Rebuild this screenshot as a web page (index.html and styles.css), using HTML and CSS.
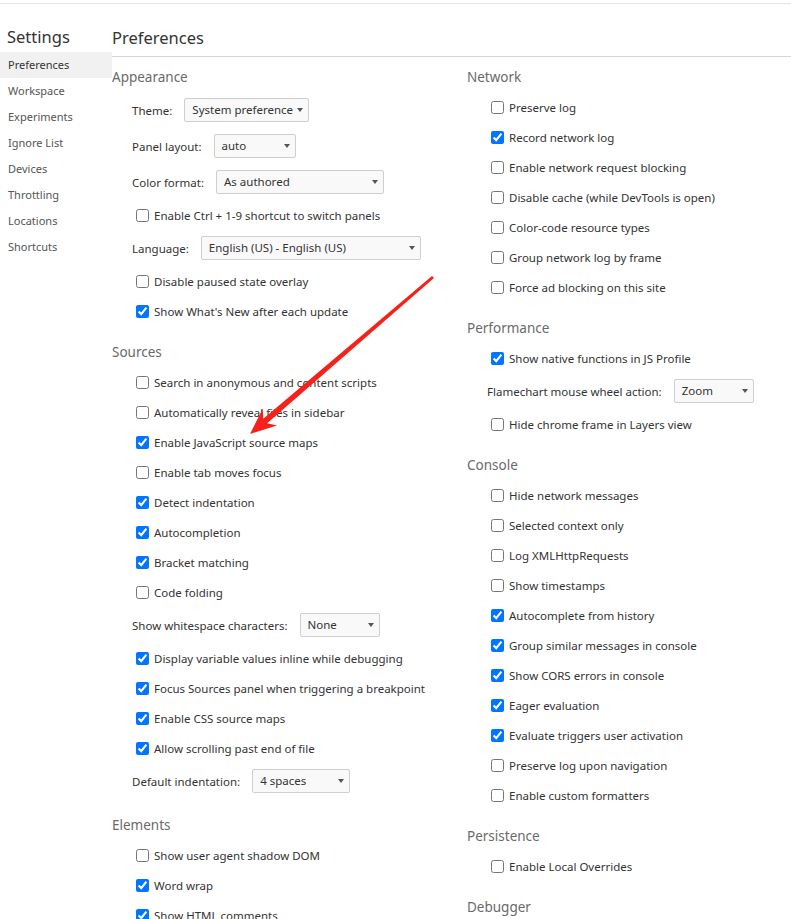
FILE: index.html
```html
<!doctype html>
<html>
<head>
<meta charset="utf-8">
<title>Settings</title>
<link rel="stylesheet" href="styles.css">
</head>
<body>
<div class="topbar"></div>
<div class="page">
	<div class="sidebar">
		<div class="sidebar-title">Settings</div>
		<ul class="nav">
			<li class="active">Preferences</li>
			<li>Workspace</li>
			<li>Experiments</li>
			<li>Ignore List</li>
			<li>Devices</li>
			<li>Throttling</li>
			<li>Locations</li>
			<li>Shortcuts</li>
		</ul>
	</div>
	<div class="main">
		<div class="header">Preferences</div>
		<div class="columns">
			<div class="col">
				<div class="section">
					<div class="section-title">Appearance</div>
					<div class="row sel"><span>Theme:</span><div class="select w-theme">System preference</div></div>
					<div class="row sel"><span>Panel layout:</span><div class="select w-panel">auto</div></div>
					<div class="row sel"><span>Color format:</span><div class="select w-color">As authored</div></div>
					<label class="row"><input type="checkbox">Enable Ctrl + 1-9 shortcut to switch panels</label>
					<div class="row sel"><span>Language:</span><div class="select w-lang">English (US) - English (US)</div></div>
					<label class="row"><input type="checkbox">Disable paused state overlay</label>
					<label class="row"><input type="checkbox" checked>Show What's New after each update</label>
				</div>
				<div class="section">
					<div class="section-title">Sources</div>
					<label class="row"><input type="checkbox">Search in anonymous and content scripts</label>
					<label class="row"><input type="checkbox">Automatically reveal files in sidebar</label>
					<label class="row"><input type="checkbox" checked>Enable JavaScript source maps</label>
					<label class="row"><input type="checkbox">Enable tab moves focus</label>
					<label class="row"><input type="checkbox" checked>Detect indentation</label>
					<label class="row"><input type="checkbox" checked>Autocompletion</label>
					<label class="row"><input type="checkbox" checked>Bracket matching</label>
					<label class="row"><input type="checkbox">Code folding</label>
					<div class="row sel"><span>Show whitespace characters:</span><div class="select w-space">None</div></div>
					<label class="row"><input type="checkbox" checked>Display variable values inline while debugging</label>
					<label class="row"><input type="checkbox" checked>Focus Sources panel when triggering a breakpoint</label>
					<label class="row"><input type="checkbox" checked>Enable CSS source maps</label>
					<label class="row"><input type="checkbox" checked>Allow scrolling past end of file</label>
					<div class="row sel"><span>Default indentation:</span><div class="select w-indent">4 spaces</div></div>
				</div>
				<div class="section">
					<div class="section-title">Elements</div>
					<label class="row"><input type="checkbox">Show user agent shadow DOM</label>
					<label class="row"><input type="checkbox" checked>Word wrap</label>
					<label class="row"><input type="checkbox" checked>Show HTML comments</label>
				</div>
			</div>
			<div class="col">
				<div class="section">
					<div class="section-title">Network</div>
					<label class="row"><input type="checkbox">Preserve log</label>
					<label class="row"><input type="checkbox" checked>Record network log</label>
					<label class="row"><input type="checkbox">Enable network request blocking</label>
					<label class="row"><input type="checkbox">Disable cache (while DevTools is open)</label>
					<label class="row"><input type="checkbox">Color-code resource types</label>
					<label class="row"><input type="checkbox">Group network log by frame</label>
					<label class="row"><input type="checkbox">Force ad blocking on this site</label>
				</div>
				<div class="section">
					<div class="section-title">Performance</div>
					<label class="row"><input type="checkbox" checked>Show native functions in JS Profile</label>
					<div class="row sel"><span>Flamechart mouse wheel action:</span><div class="select w-flame">Zoom</div></div>
					<label class="row"><input type="checkbox">Hide chrome frame in Layers view</label>
				</div>
				<div class="section">
					<div class="section-title">Console</div>
					<label class="row"><input type="checkbox">Hide network messages</label>
					<label class="row"><input type="checkbox">Selected context only</label>
					<label class="row"><input type="checkbox">Log XMLHttpRequests</label>
					<label class="row"><input type="checkbox">Show timestamps</label>
					<label class="row"><input type="checkbox" checked>Autocomplete from history</label>
					<label class="row"><input type="checkbox" checked>Group similar messages in console</label>
					<label class="row"><input type="checkbox" checked>Show CORS errors in console</label>
					<label class="row"><input type="checkbox" checked>Eager evaluation</label>
					<label class="row"><input type="checkbox" checked>Evaluate triggers user activation</label>
					<label class="row"><input type="checkbox">Preserve log upon navigation</label>
					<label class="row"><input type="checkbox">Enable custom formatters</label>
				</div>
				<div class="section">
					<div class="section-title">Persistence</div>
					<label class="row"><input type="checkbox">Enable Local Overrides</label>
				</div>
				<div class="section">
					<div class="section-title">Debugger</div>
				</div>
			</div>
		</div>
	</div>
</div>
<svg class="arrow" width="791" height="919" viewBox="0 0 791 919">
	<polygon fill="#f5221b" points="434,278.1 267.2,423.3 277,425.5 250,434 262.7,408.7 263.3,418.7 432,275.9"/>
</svg>
</body>
</html>
```
FILE: styles.css
```css
*{box-sizing:border-box;}
html,body{margin:0;padding:0;height:919px;overflow:hidden;background:#fff;}
body{font-family:"Noto Sans","Liberation Sans",sans-serif;color:#333;position:relative;}
.topbar{height:4px;border-bottom:1px solid #e2e2e2;}
.page{display:flex;}
.sidebar{width:112px;flex:none;}
.sidebar-title{height:48px;padding:20px 0 0 7px;line-height:26px;font-size:16.5px;color:#333;}
.nav{margin:0;padding:0;list-style:none;}
.nav li{height:26px;line-height:26px;padding-left:8px;font-size:11px;color:#555;}
.nav li.active{background:#f1f1f1;color:#333;}
.main{flex:1;}
.header{height:53px;padding-top:21px;line-height:26px;font-size:16.5px;color:#333;border-bottom:1px solid #d6d6d6;}
.columns{display:flex;padding-top:5px;}
.col{width:355px;flex:none;}
.section{margin-bottom:11px;}
.section-title{height:30px;line-height:30px;font-size:13.5px;color:#6a6a6a;}
.row{display:flex;align-items:center;height:30px;padding-left:20px;font-size:11.5px;color:#333;}
.row input{margin:0 5px 0 4px;width:13px;height:13px;}
.row.sel{height:36px;}
.select{position:relative;height:24px;line-height:22px;margin-left:12px;padding-left:7px;border:1px solid #cfcfcf;border-radius:2px;background:#f9f9f9;color:#333;}
.select::after{content:"";position:absolute;right:5px;top:9px;border-left:3.5px solid transparent;border-right:3.5px solid transparent;border-top:4px solid #555;}
.w-theme{width:125px;}
.w-panel{width:82px;}
.w-color{width:168px;}
.w-lang{width:220px;}
.w-flame{width:80px;}
.w-space{width:80px;}
.w-indent{width:98px;}
.arrow{position:absolute;left:0;top:0;pointer-events:none;}
```
